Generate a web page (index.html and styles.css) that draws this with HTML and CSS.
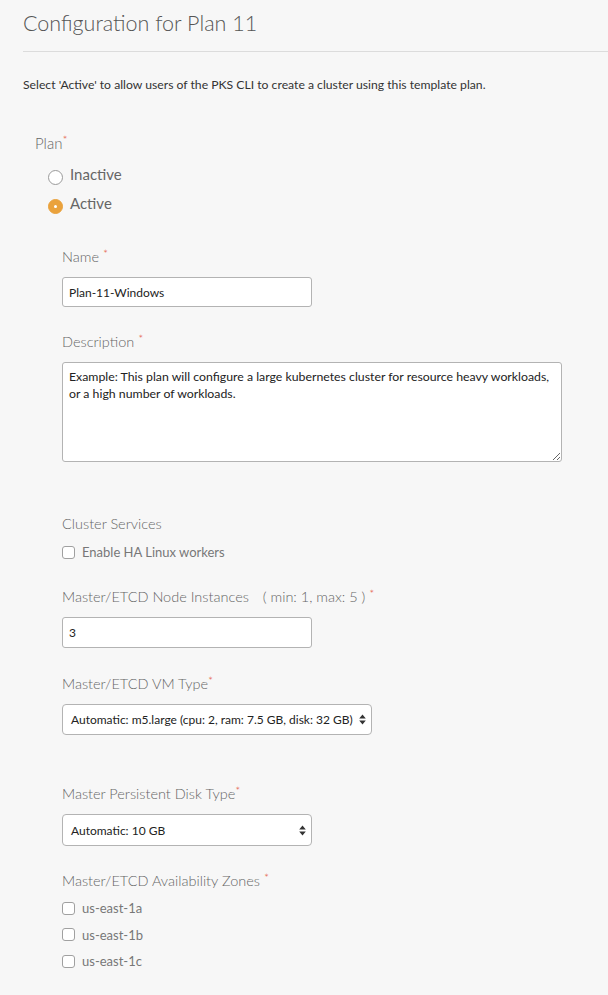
FILE: index.html
```html
<!DOCTYPE html>
<html lang="en">
<head>
<meta charset="utf-8">
<title>Configuration for Plan 11</title>
<link rel="stylesheet" href="styles.css">
</head>
<body>
<div class="page">
  <h1 class="title">Configuration for Plan 11</h1>
  <div class="rule"></div>
  <p class="intro">Select 'Active' to allow users of the PKS CLI to create a cluster using this template plan.</p>

  <div class="plan">
    <div class="plan-label">Plan<span class="req">*</span></div>
    <div class="radios">
      <div class="radio-row"><span class="radio"></span><span class="radio-text">Inactive</span></div>
      <div class="radio-row"><span class="radio checked"></span><span class="radio-text">Active</span></div>
    </div>

    <div class="fields">
      <div class="field">
        <div class="label">Name <span class="req">*</span></div>
        <input class="text-input" type="text" value="Plan-11-Windows">
      </div>

      <div class="field field-desc">
        <div class="label">Description <span class="req">*</span></div>
        <textarea class="text-area">Example: This plan will configure a large kubernetes cluster for resource heavy workloads,
or a high number of workloads.</textarea>
      </div>

      <div class="field field-mid">
        <div class="label">Cluster Services</div>
        <div class="check-row single"><span class="check"></span><span class="check-text">Enable HA Linux workers</span></div>
      </div>

      <div class="field field-mid">
        <div class="label">Master/ETCD Node Instances <span class="range">( min: 1, max: 5 )</span> <span class="req">*</span></div>
        <input class="text-input tall" type="text" value="3">
      </div>

      <div class="field field-vm">
        <div class="label">Master/ETCD VM Type<span class="req">*</span></div>
        <div class="select select-auto">
          <span class="select-text">Automatic: m5.large (cpu: 2, ram: 7.5 GB, disk: 32 GB)</span>
          <svg class="arrows" width="7" height="11" viewBox="0 0 7 11"><path d="M3.5 0.5 L6.8 4.5 L0.2 4.5 Z M3.5 10.5 L6.8 6.5 L0.2 6.5 Z" fill="#333"/></svg>
        </div>
      </div>

      <div class="field">
        <div class="label">Master Persistent Disk Type<span class="req">*</span></div>
        <div class="select select-fixed">
          <span class="select-text">Automatic: 10 GB</span>
          <svg class="arrows" width="7" height="11" viewBox="0 0 7 11"><path d="M3.5 0.5 L6.8 4.5 L0.2 4.5 Z M3.5 10.5 L6.8 6.5 L0.2 6.5 Z" fill="#333"/></svg>
        </div>
      </div>

      <div class="field">
        <div class="label">Master/ETCD Availability Zones <span class="req">*</span></div>
        <div class="zones">
          <div class="check-row zone"><span class="check"></span><span class="check-text">us-east-1a</span></div>
          <div class="check-row zone"><span class="check"></span><span class="check-text">us-east-1b</span></div>
          <div class="check-row zone"><span class="check"></span><span class="check-text">us-east-1c</span></div>
        </div>
      </div>
    </div>
  </div>
</div>
</body>
</html>
```

FILE: styles.css
```css
html, body {
  margin: 0;
  padding: 0;
  background: #f7f7f7;
}

body {
  font-family: "Lato", "Open Sans", sans-serif;
  color: #666;
}

.page {
  padding: 0 0 20px 23px;
}

.title {
  margin: 0;
  padding-top: 8px;
  font-size: 21.5px;
  line-height: 30px;
  font-weight: 300;
  color: #555;
}

.rule {
  margin-top: 13px;
  height: 1px;
  background: #dcdcdc;
}

.intro {
  margin: 25px 0 0 0;
  font-size: 12.2px;
  line-height: 16px;
  color: #333;
}

.plan {
  margin-top: 40px;
  padding-left: 12px;
}

.plan-label {
  font-size: 15px;
  line-height: 20px;
  font-weight: 300;
  color: #666;
}

.req {
  color: #e4573f;
  font-size: 12px;
  vertical-align: top;
  line-height: 14px;
}

.radios {
  margin-top: 11px;
  padding-left: 13px;
  display: flex;
  flex-direction: column;
  gap: 9px;
}

.radio-row {
  display: flex;
  align-items: center;
  gap: 7px;
  height: 20px;
}

.radio {
  box-sizing: border-box;
  width: 15px;
  height: 15px;
  border-radius: 50%;
  border: 1px solid #9a9a9a;
  background: #fff;
  margin-top: 6px;
  flex: none;
  position: relative;
}

.radio.checked {
  border-color: #eaa23c;
  background: #eaa23c;
}

.radio.checked::after {
  content: "";
  position: absolute;
  left: 5px;
  top: 5px;
  width: 3px;
  height: 3px;
  border-radius: 50%;
  background: #fff;
}

.radio-text {
  font-size: 15px;
  line-height: 20px;
  color: #666;
  font-weight: 400;
}

.fields {
  margin-top: 34px;
  padding-left: 27px;
}

.field {
  margin-bottom: 25px;
}

.field-desc {
  margin-bottom: 52px;
}

.field-mid {
  margin-bottom: 26px;
}

.field-vm {
  margin-bottom: 49px;
}

.label {
  font-size: 14.5px;
  line-height: 20px;
  font-weight: 300;
  color: #666;
  margin-bottom: 10px;
}

.range {
  margin-left: 10px;
}

.text-input {
  display: block;
  box-sizing: border-box;
  width: 250px;
  height: 30px;
  margin: 0;
  padding: 0 6px;
  border: 1px solid #b3b3b3;
  border-radius: 3px;
  background: #fff;
  font-family: "Lato", sans-serif;
  font-size: 12px;
  color: #222;
  outline: none;
}

.text-input.tall {
  height: 31px;
}

.text-area {
  display: block;
  box-sizing: border-box;
  width: 500px;
  height: 100px;
  margin: 0;
  padding: 5px 6px;
  border: 1px solid #b3b3b3;
  border-radius: 3px;
  background: #fff;
  font-family: "Lato", sans-serif;
  font-size: 12.3px;
  line-height: 17px;
  color: #222;
  outline: none;
  white-space: pre-wrap;
}

.check-row {
  display: flex;
  align-items: center;
  gap: 7px;
  height: 18px;
}

.check-row.single {
  margin-top: -1px;
}

.check {
  box-sizing: border-box;
  width: 13px;
  height: 13px;
  border: 1px solid #a0a0a0;
  border-radius: 3px;
  background: #fff;
  flex: none;
}

.check-text {
  font-size: 13px;
  color: #777;
  font-weight: 400;
}

.select {
  box-sizing: border-box;
  display: flex;
  align-items: center;
  height: 31px;
  padding: 0 5px 0 8px;
  border: 1px solid #b3b3b3;
  border-radius: 4px;
  background: #fff;
  font-size: 12px;
  color: #222;
}

.select-auto {
  display: inline-flex;
  gap: 6px;
}

.select-fixed {
  width: 250px;
  height: 32px;
  justify-content: space-between;
}

.arrows {
  flex: none;
}

.zones {
  display: flex;
  flex-direction: column;
  margin-top: -6px;
}

.zone {
  height: 26.5px;
}
```
